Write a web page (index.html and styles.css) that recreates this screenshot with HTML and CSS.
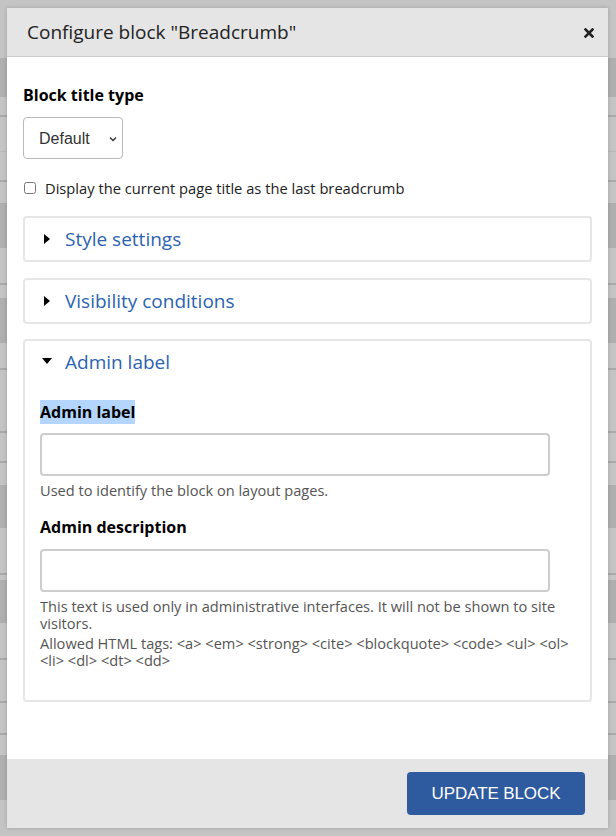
FILE: index.html
```html
<!DOCTYPE html>
<html lang="en">
<head>
<meta charset="utf-8">
<title>Configure block</title>
<link rel="stylesheet" href="styles.css">
</head>
<body>
<div class="page">
  <div class="band light"></div>
  <div class="band dark"></div>
  <div class="band light line"></div>
  <div class="band light line-soft"></div>
  <div class="band light line"></div>
  <div class="band light"></div>
  <div class="band dark"></div>
  <div class="band light line"></div>
  <div class="band light"></div>
  <div class="band dark"></div>
  <div class="band light line"></div>
  <div class="band light line"></div>
  <div class="band light line"></div>
  <div class="band light"></div>
  <div class="band dark"></div>
  <div class="band light line"></div>
  <div class="band light"></div>
  <div class="band dark"></div>
  <div class="band light line"></div>
  <div class="band light line"></div>
  <div class="band light line"></div>
  <div class="band light"></div>
  <div class="band dark"></div>
  <div class="band light"></div>
</div>

<div class="dialog" role="dialog">
  <div class="dialog-header">
    <h1 class="dialog-title">Configure block "Breadcrumb"</h1>
    <button class="close" aria-label="Close">
      <svg width="10" height="10" viewBox="0 0 10 10"><path d="M1.5 1.5 L8.5 8.5 M8.5 1.5 L1.5 8.5" stroke="#222" stroke-width="2.6" stroke-linecap="square"/></svg>
    </button>
  </div>

  <div class="dialog-content">
    <label class="form-label">Block title type</label>
    <div class="select-wrap">
      <select class="select"><option>Default</option></select>
      <svg class="chevron" width="8" height="6" viewBox="0 0 8 6"><path d="M1 1.5 L4 4.5 L7 1.5" fill="none" stroke="#333" stroke-width="1.4"/></svg>
    </div>

    <label class="check-row">
      <input type="checkbox" class="checkbox">
      <span>Display the current page title as the last breadcrumb</span>
    </label>

    <div class="details">
      <div class="summary">
        <span class="tri-right"></span>
        <span class="summary-text">Style settings</span>
      </div>
    </div>

    <div class="details">
      <div class="summary">
        <span class="tri-right"></span>
        <span class="summary-text">Visibility conditions</span>
      </div>
    </div>

    <div class="details open">
      <div class="summary">
        <span class="tri-down"></span>
        <span class="summary-text">Admin label</span>
      </div>
      <div class="details-body">
        <label class="form-label field-label"><span class="highlight">Admin label</span></label>
        <input type="text" class="text-input">
        <div class="description">Used to identify the block on layout pages.</div>

        <label class="form-label field-label second">Admin description</label>
        <input type="text" class="text-input">
        <div class="description multi">
          <p>This text is used only in administrative interfaces. It will not be shown to site visitors.</p>
          <p>Allowed HTML tags: &lt;a&gt; &lt;em&gt; &lt;strong&gt; &lt;cite&gt; &lt;blockquote&gt; &lt;code&gt; &lt;ul&gt; &lt;ol&gt; &lt;li&gt; &lt;dl&gt; &lt;dt&gt; &lt;dd&gt;</p>
        </div>
      </div>
    </div>
  </div>

  <div class="dialog-footer">
    <button class="btn-primary">UPDATE BLOCK</button>
  </div>
</div>
</body>
</html>
```

FILE: styles.css
```css
* { box-sizing: border-box; }

html, body {
  margin: 0;
  padding: 0;
  width: 616px;
  height: 836px;
  overflow: hidden;
}

body {
  font-family: "Open Sans", "Noto Sans", sans-serif;
  background: #c3c3c3;
  position: relative;
}

/* underlying page behind the modal overlay */
.page {
  display: grid;
  grid-template-rows: 58px 39px 20px 35px 30px 21px 45px 37px 13px 45px 27px 63px 30px 22px 43px 47px 5px 43px 37px 43px 32px 20px 45px 36px;
  height: 836px;
}
.band.light { background: #c4c4c4; }
.band.dark { background: #afafaf; }
.band.line { border-bottom: 2px solid #a9a9a9; }
.band.line-soft { border-bottom: 1px solid #b8b8b8; }

.dialog {
  position: absolute;
  left: 7px;
  top: 8px;
  width: 601px;
  height: 820px;
  background: #fff;
  display: flex;
  flex-direction: column;
  box-shadow: 0 0 4px rgba(0, 0, 0, 0.18);
}

.dialog-header {
  height: 49px;
  flex: none;
  background: #e5e5e5;
  border-bottom: 1px solid #cccccc;
  display: flex;
  align-items: center;
  justify-content: space-between;
  padding: 0 13px 0 20px;
}

.dialog-title {
  margin: 0;
  font-size: 19px;
  font-weight: 400;
  color: #222;
  line-height: 24px;
}

.close {
  border: 0;
  background: none;
  padding: 0;
  width: 12px;
  height: 12px;
  display: flex;
  align-items: center;
  justify-content: center;
  margin-top: 2px;
}

.dialog-content {
  flex: 1;
  padding: 27px 16px 0 16px;
  display: flex;
  flex-direction: column;
  align-items: flex-start;
}

.form-label {
  display: block;
  font-size: 16px;
  font-weight: 700;
  color: #000;
  line-height: 22px;
}

.select-wrap {
  position: relative;
  margin-top: 11px;
  width: 100px;
  height: 42px;
}

.select {
  appearance: none;
  -webkit-appearance: none;
  width: 100px;
  height: 42px;
  border: 1px solid #b9b9b9;
  border-radius: 4px;
  background: #fff;
  font-family: "Liberation Sans", Arial, sans-serif;
  font-size: 16px;
  color: #333;
  padding: 0 0 0 15px;
  margin: 0;
}

.chevron {
  position: absolute;
  right: 6px;
  top: 19px;
  pointer-events: none;
}

.check-row {
  margin-top: 19px;
  display: flex;
  align-items: center;
  font-size: 14.7px;
  line-height: 20px;
  color: #222;
}

.checkbox {
  margin: 0 9px 0 1px;
  width: 12px;
  height: 12px;
}

.details {
  align-self: stretch;
  border: 2px solid #e6e6e6;
  border-radius: 4px;
  margin-top: 15px;
}
.check-row + .details { margin-top: 18px; }
.check-row + .details + .details { margin-top: 16px; }

.summary {
  height: 42px;
  display: flex;
  align-items: center;
  padding-left: 19px;
}

.summary-text {
  font-size: 19px;
  color: #2c63b1;
  line-height: 24px;
}

.tri-right {
  width: 0;
  height: 0;
  border-top: 5px solid transparent;
  border-bottom: 5px solid transparent;
  border-left: 6px solid #000;
  margin-right: 15px;
}

.tri-down {
  width: 0;
  height: 0;
  border-left: 5px solid transparent;
  border-right: 5px solid transparent;
  border-top: 6px solid #000;
  margin-left: -2px;
  margin-right: 13px;
  margin-top: -2px;
}

.details-body {
  padding: 17px 15px 31px 15px;
}

.field-label {
  line-height: 24px;
}

.highlight {
  background: #b4d5fd;
  display: inline-block;
  line-height: 24px;
}

.field-label.second {
  margin-top: 16px;
}

.text-input {
  display: block;
  width: 510px;
  height: 43px;
  border: 2px solid #cdcdcd;
  border-radius: 4px;
  margin-top: 9px;
  padding: 0 8px;
  font-family: inherit;
  font-size: 15px;
  background: #fff;
}
.field-label.second + .text-input { margin-top: 10px; }

.description {
  margin-top: 5px;
  font-size: 14.6px;
  line-height: 18px;
  color: #555;
}

.description.multi {
  line-height: 17px;
  margin-top: 6px;
}

.description p {
  margin: 0;
}
.description p + p {
  margin-top: 3px;
}

.dialog-footer {
  height: 69px;
  flex: none;
  background: #e5e5e5;
  display: flex;
  justify-content: flex-end;
  align-items: flex-start;
  padding: 13px 23px 0 0;
}

.btn-primary {
  width: 178px;
  height: 43px;
  border: 0;
  border-radius: 4px;
  background: #2e5aa0;
  color: #fff;
  font-family: "Liberation Sans", Arial, sans-serif;
  font-size: 17px;
  letter-spacing: -0.1px;
  padding: 0;
}
```
